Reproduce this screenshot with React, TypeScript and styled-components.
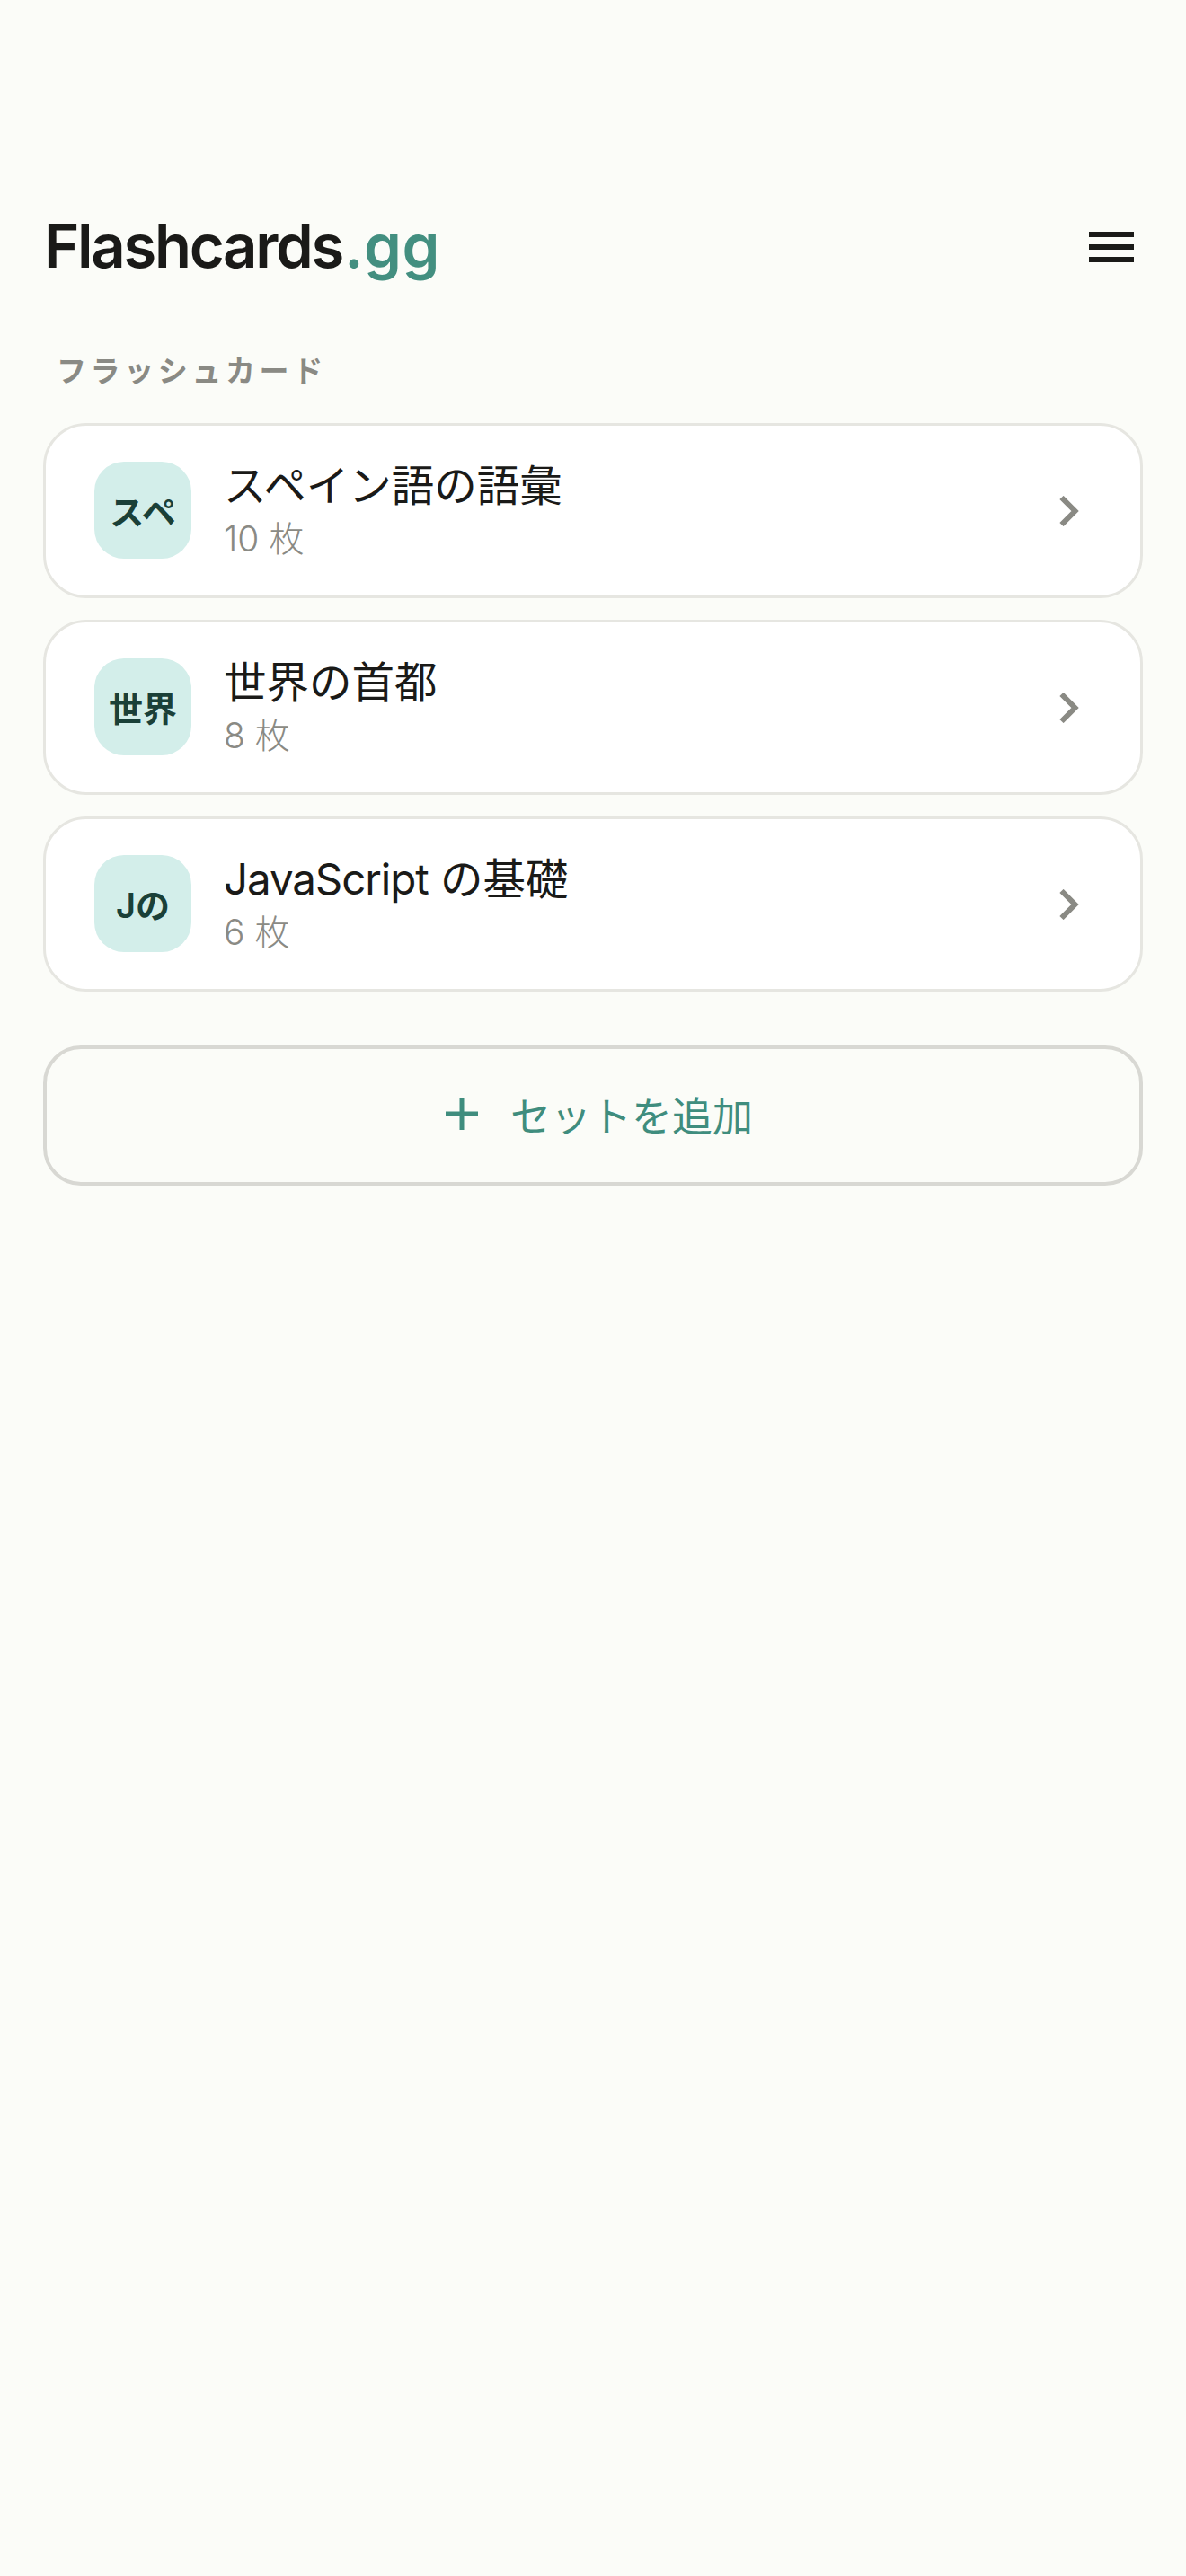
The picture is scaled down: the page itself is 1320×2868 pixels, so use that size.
import React from "react";
import styled, { createGlobalStyle } from "styled-components";

const FONT = `Inter, "Noto Sans CJK JP", sans-serif`;

const Global = createGlobalStyle`
  html, body { margin: 0; padding: 0; background: #fbfcf8; }
  body { font-family: ${FONT}; }
`;

const Page = styled.main`
  box-sizing: border-box;
  width: 1320px;
  min-height: 2868px;
  padding: 232px 48px 0;
  background: #fbfcf8;
  display: flex;
  flex-direction: column;
`;

const Header = styled.header`
  display: flex;
  align-items: center;
  justify-content: space-between;
  height: 84px;
  padding-right: 10px;
`;

const Logo = styled.h1`
  margin: 0 0 0 1px;
  font-size: 67px;
  line-height: 84px;
  font-weight: 600;
  letter-spacing: -2.3px;
  color: #1a1a18;
`;

const LogoAccent = styled.span`
  margin-left: 2px;
  letter-spacing: 0.5px;
  color: #438f80;
`;

const MenuButton = styled.button`
  display: flex;
  flex-direction: column;
  gap: 8px;
  width: 50px;
  padding: 2px 0 0;
  border: 0;
  background: none;
`;

const MenuLine = styled.span`
  display: block;
  height: 6px;
  background: #1a1a18;
`;

const SectionLabel = styled.h2`
  margin: 76px 0 0 15px;
  font-size: 33px;
  line-height: 42px;
  font-weight: 600;
  letter-spacing: 4.6px;
  color: #8a8a84;
`;

const List = styled.div`
  display: flex;
  flex-direction: column;
  gap: 24px;
  margin-top: 37px;
`;

const Card = styled.div`
  box-sizing: border-box;
  height: 195px;
  display: flex;
  align-items: center;
  gap: 36px;
  padding: 0 68px 0 54px;
  background: #fff;
  border: 3px solid #e6e6e1;
  border-radius: 48px;
`;

const Avatar = styled.div`
  flex: none;
  width: 108px;
  height: 108px;
  display: flex;
  align-items: center;
  justify-content: center;
  border-radius: 33px;
  background: #d3eeea;
  color: #1a4038;
  font-size: 38px;
  font-weight: 600;
  margin-top: -2px;
`;

const CardText = styled.div`
  flex: 1;
  min-width: 0;
  display: flex;
  flex-direction: column;
  gap: 2px;
  margin-top: -3px;
`;

const Title = styled.div`
  font-size: 47.5px;
  line-height: 64px;
  font-weight: 400;
  color: #1a1a18;
`;

const LatinWord = styled.span`
  letter-spacing: -1.1px;
`;

const Count = styled.div`
  font-size: 39px;
  line-height: 50px;
  font-weight: 300;
  color: #8a8a84;
`;

const Chevron = styled.svg`
  flex: none;
  display: block;
  width: 22px;
  height: 34px;
`;

const AddButton = styled.button`
  box-sizing: border-box;
  margin-top: 60px;
  height: 156px;
  display: flex;
  align-items: center;
  justify-content: center;
  gap: 36px;
  padding: 0 0 4px 14px;
  background: transparent;
  border: 4.5px solid #d8d8d3;
  border-radius: 42px;
  color: #3f8d7e;
  font-family: ${FONT};
  font-size: 45px;
  font-weight: 400;
`;

const PlusIcon = styled.svg`
  flex: none;
  display: block;
  width: 36px;
  height: 36px;
`;

const sets = [
  { badge: "スペ", latin: "", title: "スペイン語の語彙", count: "10 枚" },
  { badge: "世界", latin: "", title: "世界の首都", count: "8 枚" },
  { badge: "Jの", latin: "JavaScript", title: " の基礎", count: "6 枚" },
];

export default function App() {
  return (
    <>
      <Global />
      <Page>
        <Header>
          <Logo>
            Flashcards<LogoAccent>.gg</LogoAccent>
          </Logo>
          <MenuButton aria-label="menu">
            <MenuLine />
            <MenuLine />
            <MenuLine />
          </MenuButton>
        </Header>
        <SectionLabel>フラッシュカード</SectionLabel>
        <List>
          {sets.map((s) => (
            <Card key={s.title}>
              <Avatar>{s.badge}</Avatar>
              <CardText>
                <Title>
                  {s.latin && <LatinWord>{s.latin}</LatinWord>}
                  {s.title}
                </Title>
                <Count>{s.count}</Count>
              </CardText>
              <Chevron viewBox="0 0 22 34" fill="none">
                <path d="M2.5 2 17.5 17 2.5 32" stroke="#8a8a84" strokeWidth="6" />
              </Chevron>
            </Card>
          ))}
        </List>
        <AddButton>
          <PlusIcon viewBox="0 0 36 36" fill="none">
            <path d="M18 0V36M0 18H36" stroke="#3f8d7e" strokeWidth="5" />
          </PlusIcon>
          セットを追加
        </AddButton>
      </Page>
    </>
  );
}
